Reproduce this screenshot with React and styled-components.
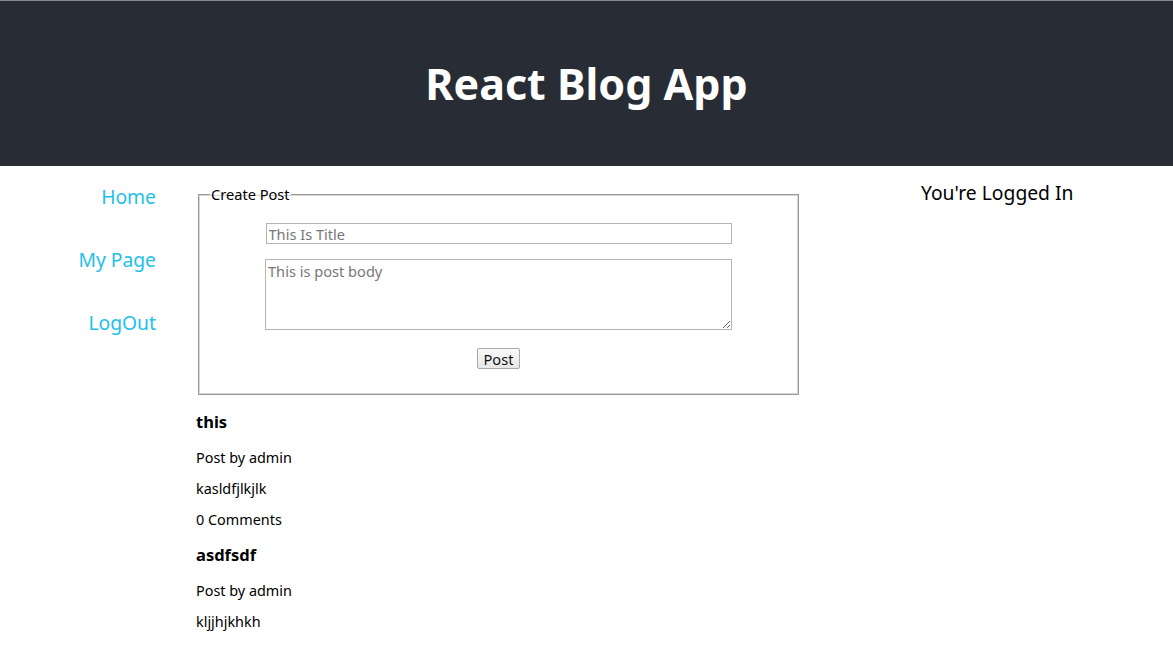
import React from 'react';
import styled, { createGlobalStyle } from 'styled-components';

const GlobalStyle = createGlobalStyle`
  html, body {
    margin: 0;
    padding: 0;
    overflow: hidden;
  }
  body {
    font-family: "Noto Sans", "DejaVu Sans", sans-serif;
    background: #ffffff;
    color: #000000;
  }
`;

const Viewport = styled.div`
  height: 100vh;
  width: 100vw;
  overflow: auto;
  border-top: 1px solid #8a8a8a;
  box-sizing: border-box;
`;

const Page = styled.div`
  min-width: 1172px;
`;

const Header = styled.header`
  background: #282c34;
  height: 165px;
  display: flex;
  align-items: center;
  justify-content: center;
`;

const Title = styled.h1`
  margin: 0;
  color: #ffffff;
  font-size: 43px;
  font-weight: 700;
`;

const Body = styled.div`
  display: grid;
  grid-template-columns: 156px 604px 1fr;
  column-gap: 40px;
  align-items: start;
`;

const Nav = styled.nav`
  display: flex;
  flex-direction: column;
  align-items: flex-end;
  gap: 36px;
  padding-top: 17px;
`;

const NavLink = styled.a`
  color: #22c0ea;
  font-size: 19.3px;
  line-height: 27px;
  text-decoration: none;
  cursor: pointer;
`;

const Main = styled.main`
  display: flex;
  flex-direction: column;
`;

const Fieldset = styled.fieldset`
  margin: 18px 0 0 2px;
  width: 601px;
  box-sizing: border-box;
  border: 1px solid #999;
  box-shadow: 0 0 0 1px #d6d6d6 inset;
  padding: 19px 0 25px;
`;

const Legend = styled.legend`
  font-size: 14.6px;
  padding: 0 1px;
  margin-left: 11px;
`;

const Form = styled.form`
  display: flex;
  flex-direction: column;
  align-items: center;
`;

const TitleInput = styled.input`
  width: 466px;
  height: 21px;
  box-sizing: border-box;
  border: 1px solid #b5b5b5;
  padding: 0 2px;
  font-family: inherit;
  font-size: 14.6px;
  &::placeholder { color: #777; }
`;

const BodyInput = styled.textarea`
  width: 467px;
  height: 71px;
  box-sizing: border-box;
  margin-top: 15px;
  border: 1px solid #b5b5b5;
  padding: 1px 2px;
  font-family: inherit;
  font-size: 14.6px;
  resize: both;
  &::placeholder { color: #777; }
`;

const Button = styled.button`
  margin-top: 18px;
  height: 21px;
  padding: 0 6px;
  font-family: inherit;
  font-size: 14.6px;
  border: 1px solid #a8a8a8;
  border-radius: 2px;
  background: linear-gradient(#fafafa, #e6e6e6);
  color: #111;
`;

const Post = styled.article`
  display: flex;
  flex-direction: column;
  & + & h3 { margin-top: 14px; }
`;

const PostTitle = styled.h3`
  font-size: 16.5px;
  font-weight: 700;
  margin: 16px 0 0;
  line-height: 22px;
`;

const PostLine = styled.p`
  font-size: 14.4px;
  line-height: 20px;
  margin: 11px 0 0;
  &:first-of-type { margin-top: 15px; }
`;

const Side = styled.aside`
  padding: 13px 0 0 81px;
  font-size: 19.3px;
  line-height: 27px;
`;

// second post's comment count sits below the fold in the screenshot
const posts = [
  { title: 'this', author: 'admin', body: 'kasldfjlkjlk', comments: 0 },
  { title: 'asdfsdf', author: 'admin', body: 'kljjhjkhkh', comments: null },
];

export default function App() {
  return (
    <>
      <GlobalStyle />
      <Viewport>
        <Page>
          <Header>
            <Title>React Blog App</Title>
          </Header>
          <Body>
            <Nav>
              <NavLink>Home</NavLink>
              <NavLink>My Page</NavLink>
              <NavLink>LogOut</NavLink>
            </Nav>
            <Main>
              <Fieldset>
                <Legend>Create Post</Legend>
                <Form onSubmit={(e) => e.preventDefault()}>
                  <TitleInput placeholder="This Is Title" />
                  <BodyInput placeholder="This is post body" />
                  <Button type="submit">Post</Button>
                </Form>
              </Fieldset>
              {posts.map((p, i) => (
                <Post key={i}>
                  <PostTitle>{p.title}</PostTitle>
                  <PostLine>Post by {p.author}</PostLine>
                  <PostLine>{p.body}</PostLine>
                  {p.comments !== null && <PostLine>{p.comments} Comments</PostLine>}
                </Post>
              ))}
            </Main>
            <Side>You're Logged In</Side>
          </Body>
        </Page>
      </Viewport>
    </>
  );
}
